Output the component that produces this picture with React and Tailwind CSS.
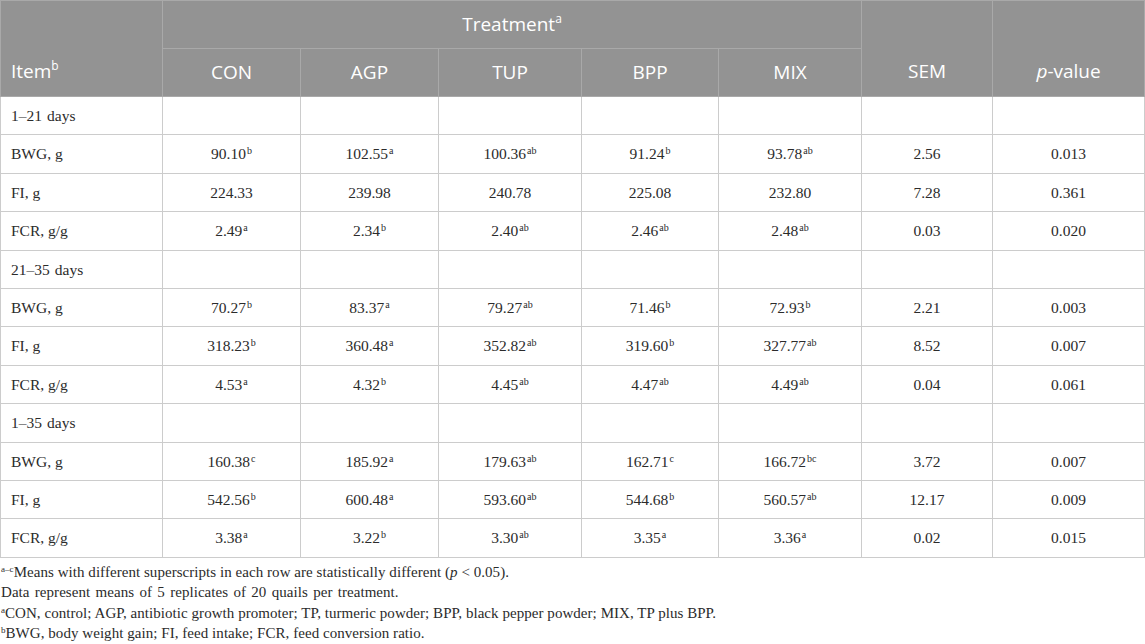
import React from "react";

// Table data (value, superscript)
const sections = [
  {
    label: "1–21 days",
    rows: [
      { item: "BWG, g", vals: [["90.10", "b"], ["102.55", "a"], ["100.36", "ab"], ["91.24", "b"], ["93.78", "ab"]], sem: "2.56", p: "0.013" },
      { item: "FI, g", vals: [["224.33"], ["239.98"], ["240.78"], ["225.08"], ["232.80"]], sem: "7.28", p: "0.361" },
      { item: "FCR, g/g", vals: [["2.49", "a"], ["2.34", "b"], ["2.40", "ab"], ["2.46", "ab"], ["2.48", "ab"]], sem: "0.03", p: "0.020" },
    ],
  },
  {
    label: "21–35 days",
    rows: [
      { item: "BWG, g", vals: [["70.27", "b"], ["83.37", "a"], ["79.27", "ab"], ["71.46", "b"], ["72.93", "b"]], sem: "2.21", p: "0.003" },
      { item: "FI, g", vals: [["318.23", "b"], ["360.48", "a"], ["352.82", "ab"], ["319.60", "b"], ["327.77", "ab"]], sem: "8.52", p: "0.007" },
      { item: "FCR, g/g", vals: [["4.53", "a"], ["4.32", "b"], ["4.45", "ab"], ["4.47", "ab"], ["4.49", "ab"]], sem: "0.04", p: "0.061" },
    ],
  },
  {
    label: "1–35 days",
    rows: [
      { item: "BWG, g", vals: [["160.38", "c"], ["185.92", "a"], ["179.63", "ab"], ["162.71", "c"], ["166.72", "bc"]], sem: "3.72", p: "0.007" },
      { item: "FI, g", vals: [["542.56", "b"], ["600.48", "a"], ["593.60", "ab"], ["544.68", "b"], ["560.57", "ab"]], sem: "12.17", p: "0.009" },
      { item: "FCR, g/g", vals: [["3.38", "a"], ["3.22", "b"], ["3.30", "ab"], ["3.35", "a"], ["3.36", "a"]], sem: "0.02", p: "0.015" },
    ],
  },
];

const heads = ["CON", "AGP", "TUP", "BPP", "MIX"];

const cell = "border border-[#cccccc] h-[38.4px] p-0 text-center align-middle";
const hcell = "border border-[#a9a9a9] bg-[#939393] text-white font-normal p-0";

function Sup({ children }) {
  return <sup className="text-[10px] -top-[5px] ml-[1px]">{children}</sup>;
}

export default function App() {
  return (
    <div className="w-[1145px] bg-white text-[#2b2b2b] font-['Liberation_Serif',serif]">
      <table className="w-full table-fixed border-collapse">
        <colgroup>
          <col className="w-[162px]" />
          <col className="w-[138px]" />
          <col className="w-[138px]" />
          <col className="w-[143px]" />
          <col className="w-[137px]" />
          <col className="w-[143px]" />
          <col className="w-[131px]" />
          <col />
        </colgroup>

        {/* Header */}
        <thead className="font-['Open_Sans',sans-serif] text-[19px]">
          <tr className="h-[48px]">
            <th rowSpan={2} className={`${hcell} text-left align-bottom pl-[10px] pb-[11px]`}>
              Item<sup className="text-[12px] -top-[8px]">b</sup>
            </th>
            <th colSpan={5} className={`${hcell} text-center`}>
              Treatment<sup className="text-[12px] -top-[8px]">a</sup>
            </th>
            <th rowSpan={2} className={`${hcell} text-center align-bottom pb-[11px]`}>SEM</th>
            <th rowSpan={2} className={`${hcell} text-center align-bottom pb-[11px]`}>
              <i>p</i>-value
            </th>
          </tr>
          <tr className="h-[48px]">
            {heads.map((h) => (
              <th key={h} className={`${hcell} text-center`}>{h}</th>
            ))}
          </tr>
        </thead>

        {/* Body */}
        <tbody className="text-[15.5px]">
          {sections.map((s) => (
            <React.Fragment key={s.label}>
              <tr>
                <td className={`${cell} !text-left pl-[10px]`}>
                  {s.label.replace(" days", "")}
                  <span className="ml-[5px]">days</span>
                </td>
                {[0, 1, 2, 3, 4, 5, 6].map((i) => (
                  <td key={i} className={cell}></td>
                ))}
              </tr>
              {s.rows.map((r) => (
                <tr key={s.label + r.item}>
                  <td className={`${cell} !text-left pl-[10px]`}>{r.item}</td>
                  {r.vals.map((v, i) => (
                    <td key={i} className={cell}>
                      {v[0]}
                      {v[1] && <Sup>{v[1]}</Sup>}
                    </td>
                  ))}
                  <td className={cell}>{r.sem}</td>
                  <td className={cell}>{r.p}</td>
                </tr>
              ))}
            </React.Fragment>
          ))}
        </tbody>
      </table>

      {/* Footnotes */}
      <div className="text-[15px] tracking-[0.05px] leading-[20.5px] pt-[4px] pl-[1px]">
        <p>
          <sup className="text-[9px] -top-[5px]">a–c</sup>Means with different superscripts in each row are statistically different (<i>p</i> &lt; 0.05).
        </p>
        <p className="[word-spacing:1.5px]">Data represent means of 5 replicates of 20 quails per treatment.</p>
        <p>
          <sup className="text-[9px] -top-[5px]">a</sup>CON, control; AGP, antibiotic growth promoter; TP, turmeric powder; BPP, black pepper powder; MIX, TP plus BPP.
        </p>
        <p>
          <sup className="text-[9px] -top-[5px]">b</sup>BWG, body weight gain; FI, feed intake; FCR, feed conversion ratio.
        </p>
      </div>
    </div>
  );
}
